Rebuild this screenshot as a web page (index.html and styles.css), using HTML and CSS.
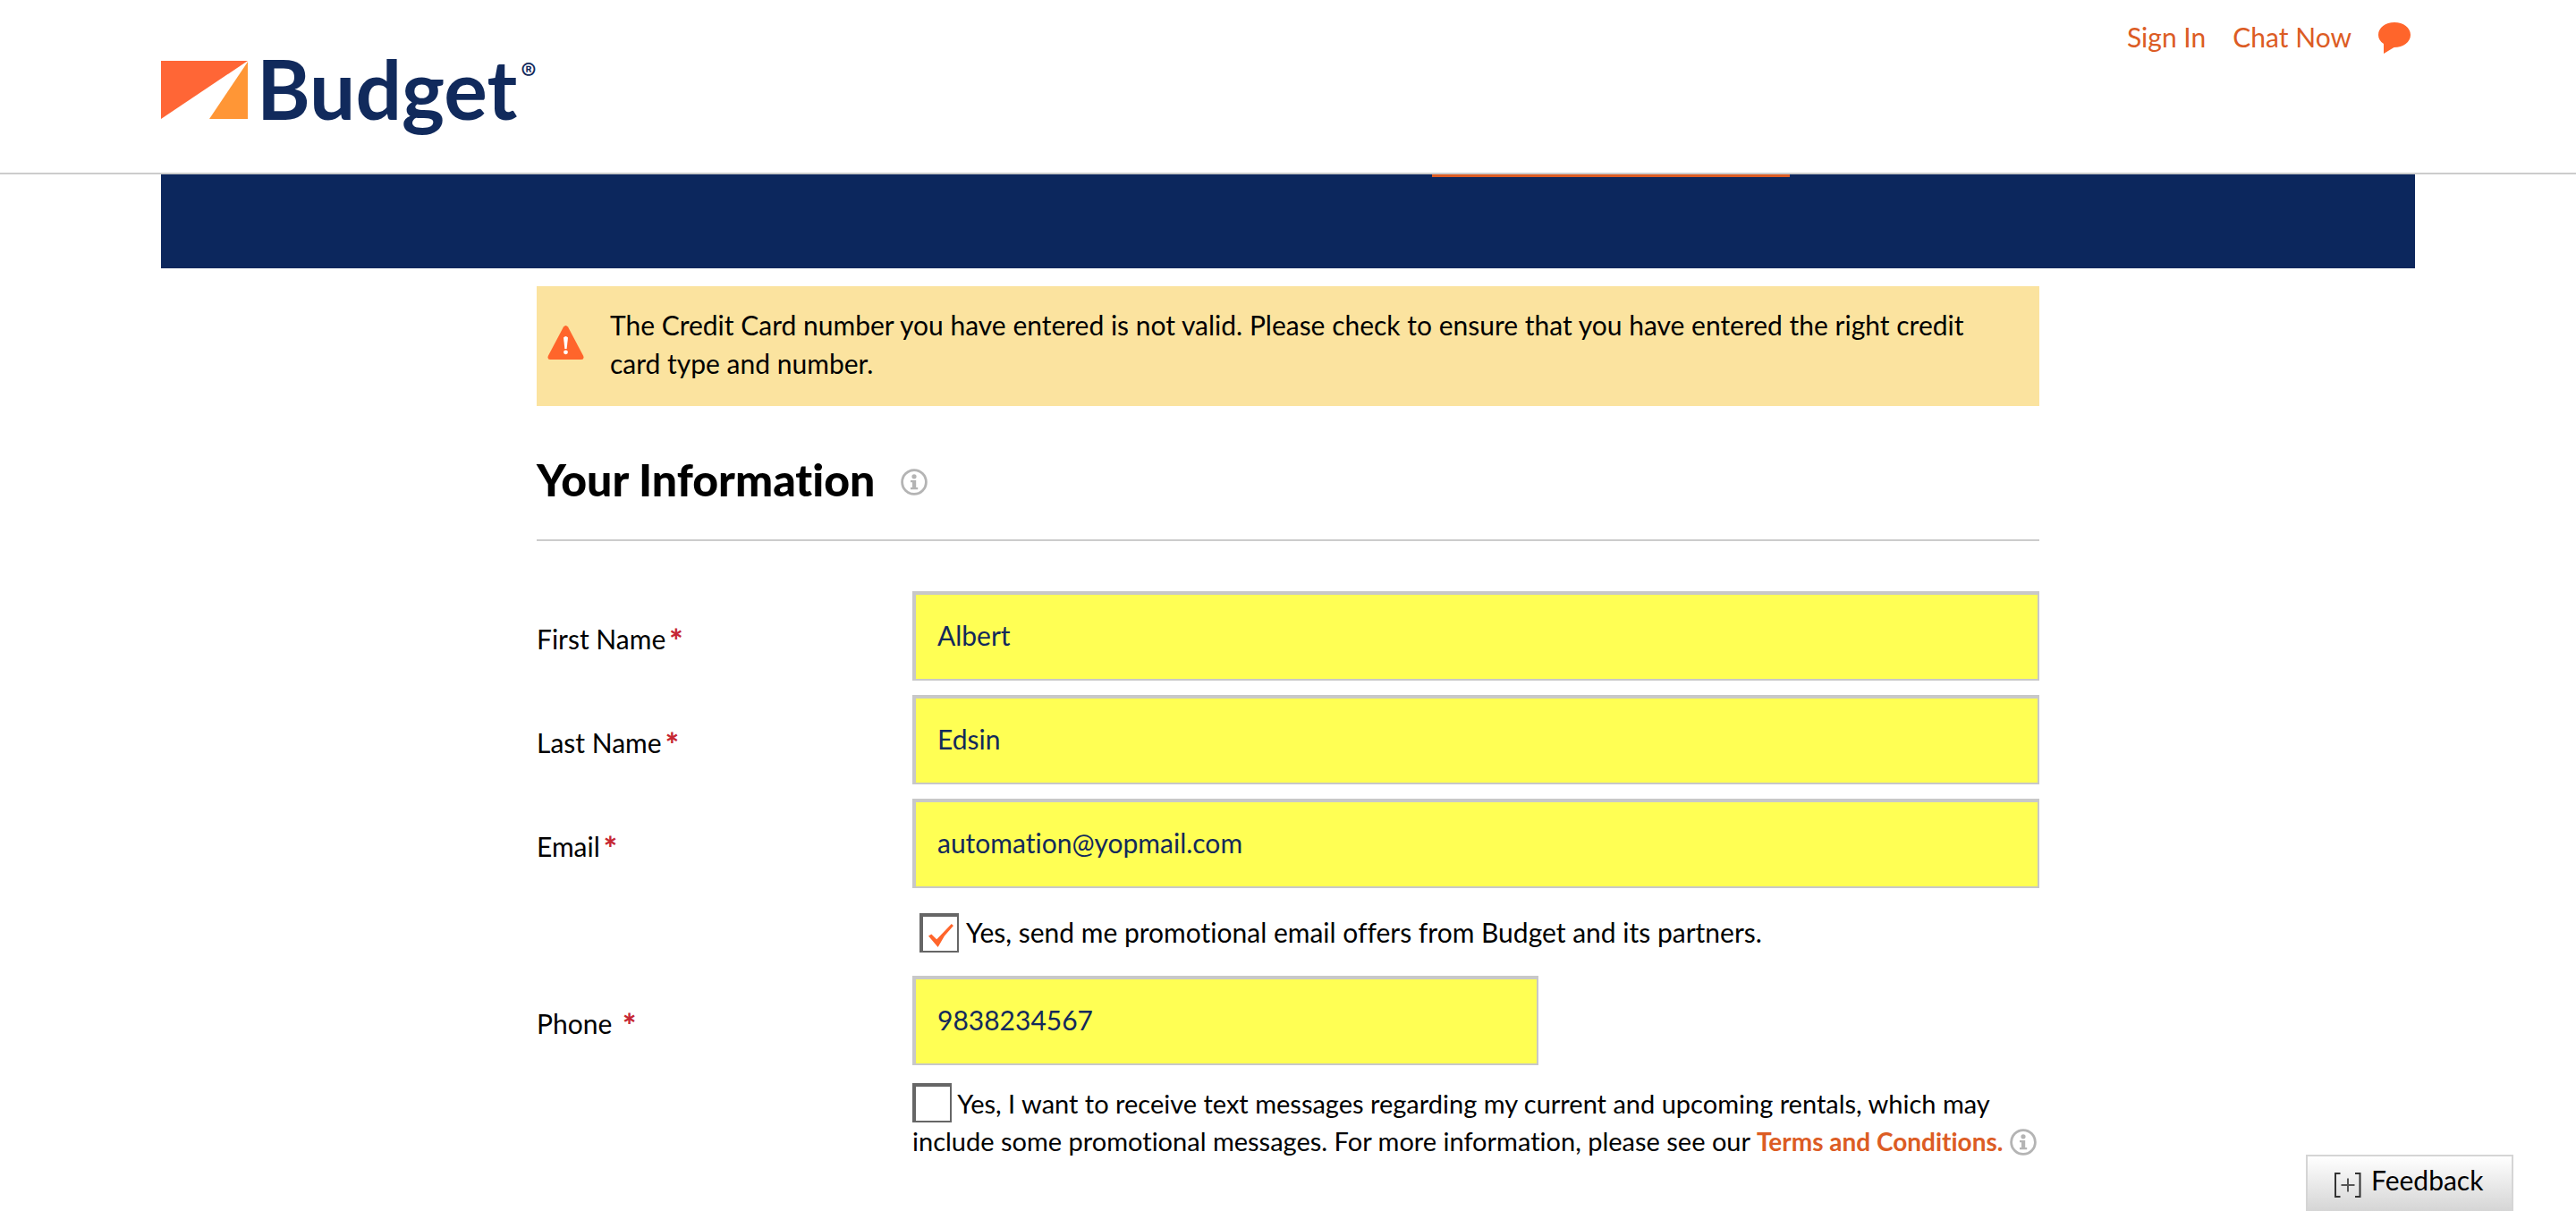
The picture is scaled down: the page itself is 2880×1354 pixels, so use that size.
FILE: index.html
```html
<!DOCTYPE html>
<html lang="en">
<head>
<meta charset="utf-8">
<title>Budget - Your Information</title>
<meta name="viewport" content="width=device-width, initial-scale=1">
<link rel="stylesheet" href="styles.css">
</head>
<body>
<svg class="sprite" aria-hidden="true">
  <symbol id="info" viewBox="0 0 30 30">
    <circle cx="15" cy="15" r="13.4" fill="none" stroke="currentColor" stroke-width="2.8"/>
    <circle cx="15" cy="8.8" r="2.6" fill="currentColor"/>
    <path d="M11 13h6.2v8h2v2.200H11V21h2v-5.800h-2z" fill="currentColor"/>
  </symbol>
</svg>

<header class="site-header">
  <a class="logo" href="#" aria-label="Budget">
    <svg class="logo-mark" viewBox="0 0 97 65" aria-hidden="true">
      <path d="M0 0H97L0 65z" fill="#ff6636"/>
      <path d="M97 1V65H54z" fill="#ff9636"/>
    </svg>
    <span class="logo-name">Budget</span><span class="logo-reg">®</span>
  </a>
  <nav class="account-nav">
    <a href="#">Sign In</a>
    <a href="#">Chat Now</a>
    <a href="#" class="chat-link" aria-label="Open chat">
      <svg class="chat-icon" viewBox="0 0 36 35" aria-hidden="true">
        <path d="M18 0C28 0 36 6 36 14S28 28 17.500 28L6 35V24C2 21.500 0 18 0 14 0 6 8 0 18 0z" fill="#ff652b"/>
      </svg>
    </a>
  </nav>
</header>

<div class="steps"><div class="step-current"></div></div>

<main class="content">
  <div class="alert" role="alert">
    <svg class="alert-icon" viewBox="0 0 41 38" aria-hidden="true">
      <path d="M18 1.500q2.500-3 5 0L40.200 34q1.200 4-2.200 4H3q-3.400 0-2.200-4z" fill="#ff652b"/>
      <path d="M18 13.500q2.500-3 5 0L21.600 26h-2.200z" fill="#fff"/>
      <circle cx="20.500" cy="29.800" r="2.400" fill="#fff"/>
    </svg>
    <p>The Credit Card number you have entered is not valid. Please check to ensure that you have entered the right credit card type and number.</p>
  </div>

  <div class="section-head">
    <h1>Your Information</h1>
    <svg class="info-icon" role="img" aria-label="More information"><use href="#info"/></svg>
  </div>

  <form class="form">
    <div class="row">
      <label for="first">First Name<b class="req">*</b></label>
      <input class="field" id="first" type="text" value="Albert">
    </div>
    <div class="row">
      <label for="last">Last Name<b class="req">*</b></label>
      <input class="field" id="last" type="text" value="Edsin">
    </div>
    <div class="row">
      <label for="email">Email<b class="req">*</b></label>
      <input class="field" id="email" type="email" value="automation@yopmail.com">
    </div>
    <div class="option option-email">
      <input class="check" id="offers" type="checkbox" checked>
      <label for="offers">Yes, send me promotional email offers from Budget and its partners.</label>
    </div>
    <div class="row">
      <label for="phone">Phone <b class="req">*</b></label>
      <input class="field field-phone" id="phone" type="tel" value="9838234567">
    </div>
    <div class="option option-text">
      <input class="check" id="texts" type="checkbox">
      <label for="texts">Yes, I want to receive text messages regarding my current and upcoming rentals, which may include some promotional messages. For more information, please see our <a class="terms" href="#">Terms and Conditions.</a></label>
      <svg class="info-icon" role="img" aria-label="More information"><use href="#info"/></svg>
    </div>
  </form>
</main>

<button class="feedback" type="button">
  <svg class="feedback-icon" viewBox="0 0 32 28" aria-hidden="true">
    <path d="M7.500 1H2v26h5.500M24 1h5.500v26H24" fill="none" stroke="#333" stroke-width="2"/>
    <path d="M8.500 14h15M16 6.500v15" stroke="#555" stroke-width="2"/>
  </svg>
  <span>Feedback</span>
</button>
</body>
</html>
```
FILE: styles.css
```css
* { box-sizing: border-box; }

body {
  margin: 0;
  background: #fff;
  color: #000;
  font: 30px/43px Lato, "Noto Sans", sans-serif;
  font-variant-ligatures: none;
}

a { color: #dc5c24; text-decoration: none; }
h1, p { margin: 0; }
input, button { font: inherit; font-variant-ligatures: none; }
.sprite { display: none; }

/* Header */
.site-header {
  display: flex;
  justify-content: space-between;
  align-items: flex-start;
  height: 195px;
  padding: 0 6.25%;
  border-bottom: 2px solid #ccc;
}

.logo {
  display: flex;
  align-items: flex-start;
  padding-top: 68px;
  color: #112a5c;
}
.logo-mark { width: 97px; height: 65px; margin-right: 10px; }
.logo-name { font-size: 91px; font-weight: 700; line-height: 62px; }
.logo-reg { margin-left: 4px; font: 500 26px/24px Inter, sans-serif; }

.account-nav { display: flex; gap: 30px; padding: 20px 5px 0 0; }
.chat-link { display: flex; padding-top: 5px; }
.chat-icon { width: 36px; height: 35px; }

/* Reservation steps bar */
.steps {
  width: 87.5%;
  height: 105px;
  margin: 0 auto;
  background: #0c275d;
}
.step-current {
  width: 400px;
  height: 3px;
  margin-left: 56.4%;
  background: #dc5c24;
}

.content { width: 58.3333%; margin: 20px auto 0; padding-bottom: 40px; }

.alert {
  display: flex;
  align-items: flex-start;
  gap: 29px;
  padding: 22px 40px 26px 12px;
  background: #fbe39f;
}
.alert-icon { flex: none; width: 41px; height: 38px; margin-top: 22px; }

.section-head {
  display: flex;
  align-items: center;
  gap: 29px;
  padding: 52px 0 31px;
  border-bottom: 2px solid #ccc;
}
h1 { padding-bottom: 6px; font-size: 50px; font-weight: 900; line-height: 60px; }
.info-icon { width: 30px; height: 30px; color: #b4b4b4; }

/* Form */
.form { padding-top: 56px; }
.row {
  display: grid;
  grid-template-columns: 1fr 3fr;
  align-items: center;
  margin-bottom: 16px;
}
.row label { padding-top: 6px; }
.req {
  margin-left: 4px;
  color: #c62733;
  font-size: 36px;
  font-weight: 900;
  line-height: 30px;
  vertical-align: -4px;
}

.field {
  width: 100%;
  height: 100px;
  padding: 0 24px 4px;
  border: 2px solid #c8c8c8;
  border-width: 4px 2px 2px 4px;
  border-radius: 0;
  background: #ffff54;
  color: #12295b;
}
.field-phone { width: 700px; }

.check {
  appearance: none;
  flex: none;
  width: 44px;
  height: 44px;
  margin: 0;
  border: 2px solid #666;
  border-width: 4px 2px 2px 4px;
  background: #fff;
}
.check:checked::before {
  content: "";
  display: block;
  width: 28px;
  height: 26px;
  margin: 8px 0 0 6px;
  background: #ff652b;
  clip-path: polygon(0 52%, 12% 44%, 33% 66%, 92% 0, 100% 8%, 64% 52%, 38% 100%);
}

.option { margin-left: 25%; }
.option-email {
  display: flex;
  align-items: flex-start;
  gap: 8px;
  padding: 12px 0 10px 8px;
  margin-bottom: 16px;
}
.option-text {
  margin-right: -16px;
  padding-top: 4px;
  font-size: 29px;
  line-height: 42px;
}
.option-text .check { vertical-align: -10px; }
.option-text .info-icon { vertical-align: -5px; }
.terms { font-size: 28px; font-weight: 700; }

/* Feedback tab */
.feedback {
  position: fixed;
  right: 70px;
  bottom: 0;
  display: flex;
  align-items: center;
  gap: 10px;
  width: 232px;
  height: 63px;
  padding: 0 0 9px 29px;
  border: 2px solid #d5d5d5;
  border-bottom: 0;
  background: linear-gradient(#fff, #d5d5d5);
  color: #000;
}
.feedback-icon { width: 32px; height: 28px; margin-top: 12px; }
```
